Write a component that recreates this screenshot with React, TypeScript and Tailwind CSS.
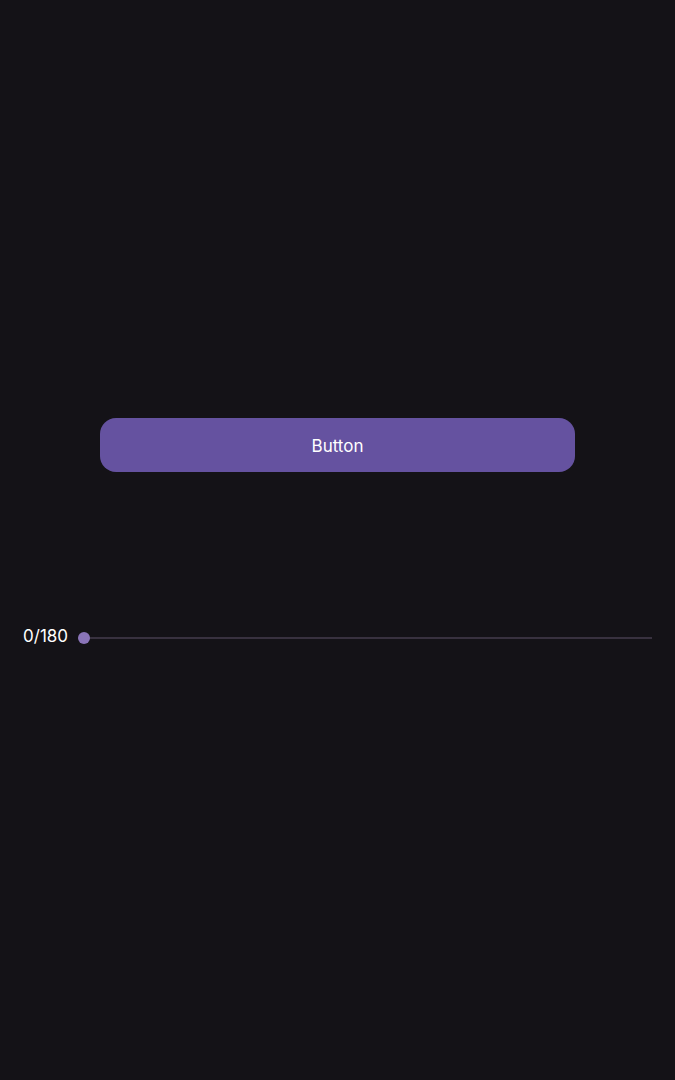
import { useState } from 'react';

const MAX = 180;

export default function App() {
  const [value, setValue] = useState(0);
  const pct = (value / MAX) * 100;

  return (
    <div
      className="w-full h-[1080px] bg-[#141217] text-white flex flex-col"
      style={{ fontFamily: 'Inter, "Noto Sans", sans-serif' }}
    >
      <div className="pt-[418px] flex justify-center">
        <button
          type="button"
          onClick={() => setValue((v) => (v >= MAX ? 0 : v + 10))}
          className="w-[475px] h-[54px] pt-[4px] rounded-[16px] bg-[#6552a0] text-[17px] text-white"
        >
          Button
        </button>
      </div>

      <div className="mt-[153px] h-[24px] flex items-center pl-[23px] pr-[23px] gap-[9px]">
        <span className="text-[17px] leading-none w-[46px] -mt-[2px]">
          {value}/{MAX}
        </span>
        <div className="relative flex-1 h-[12px] flex items-center">
          <div className="w-full h-[2px] mt-[1px] bg-[#38313f]" />
          <div
            className="absolute w-[12px] h-[12px] rounded-full bg-[#8a74b8] top-[1px]"
            style={{ left: `calc(${pct}% - ${(pct / 100) * 12}px)` }}
          />
        </div>
      </div>
    </div>
  );
}
